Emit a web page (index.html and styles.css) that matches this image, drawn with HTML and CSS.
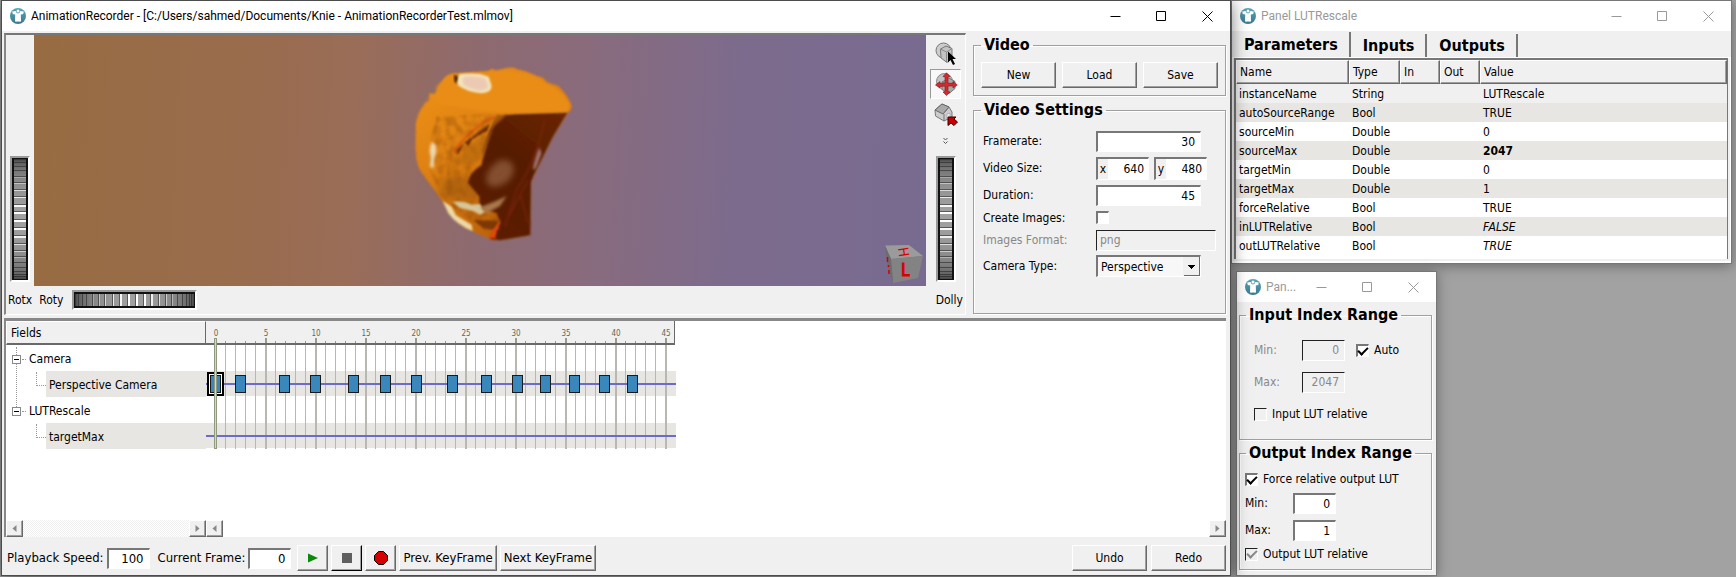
FILE: index.html
```
<!DOCTYPE html>
<html lang="en">
<head>
<meta charset="utf-8">
<title>AnimationRecorder</title>
<link rel="stylesheet" href="styles.css">
</head>
<body>
<svg class="defs" aria-hidden="true">
  <defs>
    <linearGradient id="teal" x1="0" y1="0" x2="0" y2="1"><stop offset="0" stop-color="#5ba6b8"/><stop offset="1" stop-color="#3a7890"/></linearGradient>
    <symbol id="logo" viewBox="0 0 16 16">
      <circle cx="8" cy="8" r="8" fill="url(#teal)"/>
      <path d="M2.200 3.400 5.600 3Q6 5.400 8 5.400T10.400 3L13.800 3.400 13.200 6 10.800 6.600 11 13.400 8.600 13.800 8 13 7.400 13.800 5 13.400 5.200 6.600 2.800 6Z" fill="#fff"/>
      <circle cx="8" cy="3" r="1.500" fill="#fff"/>
    </symbol>
    <symbol id="min" viewBox="0 0 11 11"><path d="M.5 5.500h10" stroke="currentColor" fill="none"/></symbol>
    <symbol id="max" viewBox="0 0 11 11"><path d="M.5.5h9v9h-9z" stroke="currentColor" fill="none"/></symbol>
    <symbol id="close" viewBox="0 0 11 11"><path d="M.5.5l10 10M10.500.5l-10 10" stroke="currentColor" fill="none"/></symbol>
    <symbol id="left" viewBox="0 0 5 9"><path d="M4.500 1v7L.5 4.500z" fill="#888"/></symbol>
    <symbol id="right" viewBox="0 0 5 9"><path d="M.5 1v7l4-3.500z" fill="#888"/></symbol>
  </defs>
</svg>

<div class="desktop">
  <main class="window window-main">
    <header class="titlebar">
      <svg class="logo"><use href="#logo"/></svg>
      <h1 class="caption">AnimationRecorder - [C:/Users/sahmed/Documents/Knie - AnimationRecorderTest.mlmov]</h1>
      <button class="wbtn" aria-label="Minimize"><svg><use href="#min"/></svg></button>
      <button class="wbtn" aria-label="Maximize"><svg><use href="#max"/></svg></button>
      <button class="wbtn" aria-label="Close"><svg><use href="#close"/></svg></button>
    </header>

    <div class="upper">
      <section class="viewer" aria-label="3D viewer">
        <div class="wheel-col"><svg class="wheel wheel-v" data-wheel="v"></svg></div>
        <div class="viewport">
          <svg class="scene" viewBox="0 0 892 251" preserveAspectRatio="xMidYMid meet">
            <defs>
              <filter id="rough" x="-10%" y="-10%" width="120%" height="120%" color-interpolation-filters="sRGB">
                <feTurbulence type="fractalNoise" baseFrequency=".15" numOctaves="3" seed="4" result="n"/>
                <feDisplacementMap in="SourceGraphic" in2="n" scale="7" xChannelSelector="R" yChannelSelector="G"/>
                <feGaussianBlur stdDeviation="2.800"/>
              </filter>
              <filter id="edge" x="-10%" y="-10%" width="120%" height="120%"><feGaussianBlur stdDeviation="2.500"/></filter>
              <filter id="soft" x="-30%" y="-30%" width="160%" height="160%"><feGaussianBlur stdDeviation="4"/></filter>
              <filter id="soft2" x="-50%" y="-50%" width="200%" height="200%"><feGaussianBlur stdDeviation="9"/></filter>
              <filter id="grain" x="0" y="0" width="100%" height="100%" color-interpolation-filters="sRGB">
                <feTurbulence type="fractalNoise" baseFrequency=".05 .035" numOctaves="4" seed="8"/>
                <feColorMatrix values="0 0 0 0 .42  0 0 0 0 .18  0 0 0 0 0  2.500 0 0 0 -.9"/>
                <feComposite in2="SourceGraphic" operator="in"/>
                <feGaussianBlur stdDeviation="2.500"/>
              </filter>
              <linearGradient id="skin" x1="0" y1="0" x2="0.600" y2="1"><stop offset="0" stop-color="#f09416"/><stop offset=".45" stop-color="#df8213"/><stop offset="1" stop-color="#b85f09"/></linearGradient>
              <linearGradient id="cut" x1="1" y1="0" x2="0.400" y2="1"><stop offset="0" stop-color="#6b2603"/><stop offset=".5" stop-color="#561c02"/><stop offset="1" stop-color="#5c1d05"/></linearGradient>
            </defs>
            <g transform="translate(366 15) scale(.3333)">
              <path d="M122 112Q130 72 165 70L230 72 275 62Q340 48 400 74L470 106Q510 140 515 170L505 190 458 262 405 372 393 400 391 557 300 571Q230 550 190 525L130 455 60 360Q46 330 47 290L48 220Q58 170 88 140Z" fill="#c4783a" opacity=".5" filter="url(#soft)"/>
              <path d="M88 130L105 132 122 112Q130 72 165 70L265 64 275 56 290 64Q340 45 350 58L375 64 400 74 430 84 440 100 475 108Q500 132 515 172L503 188 340 190 300 560 285 570Q240 560 190 525L130 455 60 360Q46 330 47 290L48 220Q58 170 88 150Z" fill="url(#skin)" filter="url(#rough)"/>
              <path d="M110 200L300 190 250 300 205 380 240 455 300 500 285 560 130 455 85 350 95 250Z" fill="#000" filter="url(#grain)" opacity=".3"/>
              <path d="M130 385Q190 365 205 385L240 455 150 448 115 430Z" fill="#9a560a" opacity=".5" filter="url(#soft2)"/>
              <path d="M318 194L503 187 458 262 430 318 402 374 393 396 391 556 300 571 270 566 300 515 290 490 240 470 238 440 205 400Q204 370 245 345 250 300 270 240Q290 205 318 194Z" fill="url(#cut)" filter="url(#edge)"/>
              <path d="M110 110Q130 85 165 78L275 66Q340 56 400 78L440 100Q495 122 512 170L503 186 340 189Q220 185 110 158Z" fill="#e98d14" filter="url(#soft)"/>
              <path d="M168 305Q190 275 215 262L268 222 262 244Q240 250 215 270L205 290 195 276 172 312Z" fill="#6b2a05" filter="url(#rough)"/>
              <path d="M165 312Q166 290 210 250T285 202" fill="none" stroke="#d8420f" stroke-width="4" filter="url(#rough)"/>
              <path d="M210 285Q235 265 262 248L250 325 200 345 165 340Z" fill="#b8690f" opacity=".6" filter="url(#soft)"/>
              <path d="M290 195L320 195 282 230 250 320 245 300Z" fill="#98500a" opacity=".8" filter="url(#rough)"/>
              <path d="M165 75Q155 90 170 102L180 82Z" fill="#3c1703" filter="url(#rough)"/>
              <path d="M178 73Q200 68 240 72L266 80 275 108Q275 128 245 130 200 126 174 106Q170 84 178 73Z" fill="#f3e4bb" filter="url(#edge)"/>
              <path d="M190 80Q220 76 255 84L265 108Q260 122 238 122 205 116 188 102Z" fill="#ecc9b3" filter="url(#soft)"/>
              <path d="M95 275Q85 300 92 320L90 350 101 355 103 325Q112 305 108 285Z" fill="#f0d8ab" filter="url(#soft)"/>
              <path d="M300 330Q340 325 342 360 335 398 290 410 260 415 258 385 265 350 300 330Z" fill="#a17050" opacity=".6" filter="url(#soft2)"/>
              <path d="M418 290Q405 320 398 360L408 355 424 310Z" fill="#a67e7b" filter="url(#soft)"/>
              <path d="M128 452L155 470 168 496 215 524 218 543Q170 525 145 490Z" fill="#eed9a3" filter="url(#edge)"/>
              <path d="M158 455Q190 452 215 464L240 462 255 485 240 494 222 484 180 474Z" fill="#d6c69a" filter="url(#edge)"/>
              <path d="M240 472L290 452 320 438 300 468 260 490Z" fill="#a9794b" filter="url(#soft)"/>
              <path d="M434 210Q410 330 350 420L315 530M385 390L325 500M360 430L385 520" fill="none" stroke="#8a2511" stroke-width="5" opacity=".6" filter="url(#soft)"/>
              <path d="M220 510L300 512 285 540 250 535Z" fill="#7d3806" filter="url(#rough)"/>
              <path d="M302 512L285 532 265 562 284 566Z" fill="#e24a0b" filter="url(#rough)"/>
            </g>
          </svg>
          <svg class="cube" viewBox="0 0 40 40" aria-hidden="true">
            <path d="M1 1.500 25 1 39 12 7 15Z" fill="#9b9b9b"/>
            <path d="M7 15 39 12 34 34 9 39Z" fill="#838383"/>
            <path d="M1 1.500 7 15 9 39 4 25Z" fill="#6d6d6d"/>
            <path d="M3.500 13v5M4.500 21v2M5 26v4" stroke="#d40000" stroke-width="1.500"/>
            <text x="17" y="32" class="cube-face">L</text>
            <text class="cube-face cube-top" transform="translate(14 4) rotate(82)">H</text>
          </svg>
        </div>
        <div class="tools">
          <button class="tool" aria-label="Select">
            <svg viewBox="0 0 24 24">
              <circle cx="9.500" cy="8.500" r="7.500" fill="#ccc" stroke="#777"/>
              <path d="M6.500 7 12 4 18 6.500V16L13 20.500 7 16Z" fill="#c2c2c2" stroke="#777"/><path d="M6.500 7l6 3 5.500-3.500M12.500 10v10" fill="none" stroke="#888"/>
              <path d="M14 9.500v11l2.500-2.500 2.500 5 2-1-2.500-5H22z" fill="#000"/>
            </svg>
          </button>
          <button class="tool tool-on" aria-label="Rotate and pan">
            <svg viewBox="0 0 24 24">
              <circle cx="10.500" cy="9.500" r="8" fill="#c4c4c4" stroke="#888"/><path d="M8 10l7-4 6 3.500v7l-6 5-7-4z" fill="#a9a9a9" stroke="#777"/><path d="M8 10l6 3 7-3.500" fill="none" stroke="#777"/>
              <path d="M12.500.8 16 4.500l-2 .5v6l5 .5V9.500L23.300 13 19 16v-2l-5 0v5.500l2 .5-3.500 3.500L9 20l2-.5V14l-5 .5V16L1.500 13 6 9.500v2l5-.5V5L9 4.500Z" fill="#d32a30" stroke="#8e1014" stroke-width=".6"/>
            </svg>
          </button>
          <button class="tool" aria-label="Home view">
            <svg viewBox="0 0 24 24">
              <path d="M1 8 8 2 15 5 18 10V15L10 19 1.500 14Z" fill="#ccc" stroke="#777"/>
              <path d="M1 8 8 2 15 5 9 12Z" fill="#aaa" stroke="#666"/><path d="M10 12v7M15 5 9 12" stroke="#777" fill="none"/><path d="M13 12v5l3-1v-5z" fill="#eee" stroke="#888" stroke-width=".5"/>
              <path d="M14 15h8l-2 2 3.500 3-3.500 3.500L17 21l-3 2.500z" fill="#c90000" stroke="#3c0000"/>
            </svg>
          </button>
          <button class="tool tool-more" aria-label="More tools"><svg viewBox="0 0 5 8"><path d="M.5 1l2 2 2-2M.5 4.500l2 2 2-2" fill="none" stroke="#555"/></svg></button>
          <svg class="wheel wheel-v" data-wheel="v"></svg>
        </div>
        <div class="viewer-foot">
          <span>Rotx</span><span>Roty</span>
          <svg class="wheel wheel-h" data-wheel="h"></svg>
          <span class="push">Dolly</span>
        </div>
      </section>

      <aside class="side">
        <fieldset class="group group-video">
          <legend>Video</legend>
          <button class="btn">New</button><button class="btn">Load</button><button class="btn">Save</button>
        </fieldset>
        <fieldset class="group group-settings">
          <legend>Video Settings</legend>
          <label for="fps">Framerate:</label><input class="field w105" id="fps" value="30">
          <label for="vx">Video Size:</label>
          <div class="pair">
            <span class="axis"><label for="vx">x</label><input id="vx" value="640"></span>
            <span class="axis"><label for="vy">y</label><input id="vy" value="480"></span>
          </div>
          <label for="dur">Duration:</label><input class="field w105" id="dur" value="45">
          <label for="ci">Create Images:</label><input type="checkbox" class="check" id="ci">
          <label for="fmt" class="off">Images Format:</label><input class="field field-text" id="fmt" value="png" disabled>
          <label for="cam">Camera Type:</label>
          <select id="cam" class="combo w105"><option>Perspective</option><option>Orthographic</option></select>
        </fieldset>
      </aside>
    </div>

    <section class="timeline" aria-label="Timeline">
      <div class="fields">
        <div class="fields-head">Fields</div>
        <ul class="tree">
          <li><span class="node"><button class="fold" aria-label="Collapse Camera"></button>Camera</span>
            <ul><li><span class="leaf">Perspective Camera</span></li></ul></li>
          <li><span class="node"><button class="fold" aria-label="Collapse LUTRescale"></button>LUTRescale</span>
            <ul><li><span class="leaf">targetMax</span></li></ul></li>
        </ul>
        <div class="scroll scroll-dither">
          <button class="sbtn" aria-label="Scroll left"><svg><use href="#left"/></svg></button>
          <button class="sbtn" aria-label="Scroll right"><svg><use href="#right"/></svg></button>
        </div>
      </div>
      <div class="tracks">
        <svg class="track-canvas" id="tracks" width="470" height="129"></svg>
        <div class="scroll">
          <button class="sbtn" aria-label="Scroll left"><svg><use href="#left"/></svg></button>
          <button class="sbtn" aria-label="Scroll right"><svg><use href="#right"/></svg></button>
        </div>
      </div>
    </section>

    <footer class="transport">
      <label for="speed">Playback Speed:</label><input class="field w43" id="speed" value="100">
      <label for="frame" class="gap">Current Frame:</label><input class="field w43" id="frame" value="0">
      <div class="transport-buttons">
        <button class="btn btn-icon" aria-label="Play"><svg viewBox="0 0 14 14"><path d="M2 2.500v9l10-4.500z" fill="#0a8a0a"/></svg></button>
        <button class="btn btn-icon btn-default" aria-label="Stop"><svg viewBox="0 0 14 14"><path d="M2 2h10v10H2z" fill="#5f5f5f"/></svg></button>
        <button class="btn btn-icon" aria-label="Record"><svg viewBox="0 0 14 14"><path d="M4.500.5h5l4 4v5l-4 4h-5l-4-4v-5z" fill="#d40000" stroke="#000" stroke-linejoin="round"/></svg></button>
        <button class="btn btn-fit">Prev. KeyFrame</button>
        <button class="btn btn-fit">Next KeyFrame</button>
      </div>
      <div class="history"><button class="btn">Undo</button><button class="btn">Redo</button></div>
    </footer>
  </main>

  <div class="panels">
    <section class="window window-lut">
      <header class="titlebar inactive">
        <svg class="logo"><use href="#logo"/></svg>
        <h2 class="caption">Panel LUTRescale</h2>
        <button class="wbtn" aria-label="Minimize"><svg><use href="#min"/></svg></button>
        <button class="wbtn" aria-label="Maximize"><svg><use href="#max"/></svg></button>
        <button class="wbtn" aria-label="Close"><svg><use href="#close"/></svg></button>
      </header>
      <div class="tabs" role="tablist">
        <button class="tab tab-on" role="tab" aria-selected="true">Parameters</button>
        <button class="tab" role="tab">Inputs</button>
        <button class="tab" role="tab">Outputs</button>
      </div>
      <div class="tab-page">
        <div class="list">
          <table class="params">
            <colgroup><col class="c-name"><col class="c-type"><col class="c-io"><col class="c-io"><col></colgroup>
            <thead><tr><th>Name</th><th>Type</th><th>In</th><th>Out</th><th>Value</th></tr></thead>
            <tbody>
              <tr class="head-row"><td>instanceName</td><td>String</td><td></td><td></td><td>LUTRescale</td></tr>
              <tr><td>autoSourceRange</td><td>Bool</td><td></td><td></td><td>TRUE</td></tr>
              <tr><td>sourceMin</td><td>Double</td><td></td><td></td><td>0</td></tr>
              <tr><td>sourceMax</td><td>Double</td><td></td><td></td><td><b>2047</b></td></tr>
              <tr><td>targetMin</td><td>Double</td><td></td><td></td><td>0</td></tr>
              <tr><td>targetMax</td><td>Double</td><td></td><td></td><td>1</td></tr>
              <tr><td>forceRelative</td><td>Bool</td><td></td><td></td><td>TRUE</td></tr>
              <tr><td>inLUTRelative</td><td>Bool</td><td></td><td></td><td><i>FALSE</i></td></tr>
              <tr><td>outLUTRelative</td><td>Bool</td><td></td><td></td><td><i>TRUE</i></td></tr>
            </tbody>
          </table>
        </div>
      </div>
    </section>

    <section class="window window-range">
      <header class="titlebar inactive">
        <svg class="logo"><use href="#logo"/></svg>
        <h2 class="caption">Pan...</h2>
        <button class="wbtn" aria-label="Minimize"><svg><use href="#min"/></svg></button>
        <button class="wbtn" aria-label="Maximize"><svg><use href="#max"/></svg></button>
        <button class="wbtn" aria-label="Close"><svg><use href="#close"/></svg></button>
      </header>
      <div class="range-body">
        <fieldset class="group group-in">
          <legend>Input Index Range</legend>
          <div class="line"><label for="imin" class="off">Min:</label><input class="field w43" id="imin" value="0" disabled>
            <input type="checkbox" class="check" id="auto" checked><label for="auto">Auto</label></div>
          <div class="line"><label for="imax" class="off">Max:</label><input class="field w43" id="imax" value="2047" disabled></div>
          <div class="line"><input type="checkbox" class="check check-dim" id="ilr"><label for="ilr">Input LUT relative</label></div>
        </fieldset>
        <fieldset class="group group-out">
          <legend>Output Index Range</legend>
          <div class="line line-check"><input type="checkbox" class="check" id="force" checked><label for="force">Force relative output LUT</label></div>
          <div class="line"><label for="omin">Min:</label><input class="field w43" id="omin" value="0"></div>
          <div class="line"><label for="omax">Max:</label><input class="field w43" id="omax" value="1"></div>
          <div class="line line-check"><input type="checkbox" class="check check-dim" id="olr" checked disabled><label for="olr">Output LUT relative</label></div>
        </fieldset>
      </div>
    </section>
  </div>
</div>
<script src="app.js"></script>
</body>
</html>
```
FILE: styles.css
```
* { box-sizing: border-box; }
body {
  margin: 0;
  background: #a2a2a2;
  color: #000;
  font: 12px/16px "DejaVu Sans Condensed", Tahoma, "Noto Sans", sans-serif;
}
button, input, select { font: inherit; color: inherit; margin: 0; padding: 0; border-radius: 0; }
button { background: none; border: 0; }
ul { list-style: none; margin: 0; padding: 0; }
.defs { position: absolute; width: 0; height: 0; }

.desktop {
  display: grid;
  grid-template-columns: minmax(0, 1fr) 501px;
  min-height: 100vh;
  padding: 0 4px 1px 1px;
}
.panels { display: flex; flex-direction: column; gap: 7px; }
.window {
  display: flex;
  flex-direction: column;
  background: #f0f0f0;
  border: 1px solid #777;
  box-shadow: 0 2px 12px rgba(0, 0, 0, .35);
}
.window-main { position: relative; z-index: 1; border-color: #4c4c4c; box-shadow: 0 2px 16px rgba(0, 0, 0, .55); }

.titlebar { display: flex; align-items: center; height: 30px; flex: none; background: #fff; padding-left: 8px; }
.logo { width: 16px; height: 16px; flex: none; }
.caption { flex: 1; margin: 0 0 0 5px; font: 12px/16px Roboto, "Noto Sans", sans-serif; white-space: nowrap; overflow: hidden; }
.inactive .caption, .inactive .wbtn { color: #999; }
.wbtn { width: 46px; height: 30px; display: grid; place-items: center; flex: none; }
.wbtn svg { width: 11px; height: 11px; }

.upper { display: flex; gap: 7px; padding: 2px 4px 0 2px; }
.viewer {
  flex: 1;
  display: grid;
  grid-template-columns: 28px minmax(0, 1fr) 39px;
  grid-template-rows: 251px 28px;
  border: 2px solid;
  border-width: 2px 1px 1px 2px;
  border-color: #777 #fff #fff #888;
}
.viewport {
  position: relative;
  overflow: hidden;
  background: linear-gradient(93deg, #976c42 0%, #996c4c 22%, #996d58 36%, #8e6a6f 49%, #8a6b7b 60%, #7d6b8d 78%, #786b90 100%);
}
.scene { display: block; width: 100%; height: 100%; }
.cube { position: absolute; right: 2px; bottom: 2px; width: 40px; height: 40px; }
.cube-face { font: 17px "DejaVu Sans Condensed", sans-serif; fill: #d80000; stroke: #d80000; stroke-width: 1px; }
.cube-top { font-size: 14px; stroke-width: 0; }
.wheel-col { display: flex; align-items: flex-end; padding: 0 0 4px 4px; }
.wheel { display: block; background: #111; border: 2px solid; border-color: #999 #fff #fff #999; }
.wheel-v { width: 20px; height: 126px; }
.wheel-h { width: 125px; height: 20px; margin-left: 2px; }
.tools { display: flex; flex-direction: column; align-items: center; padding: 4px 0; }
.tools .wheel { margin-top: auto; }
.tool { width: 31px; height: 30px; display: grid; place-items: center; border: 1px solid transparent; }
.tool svg { width: 24px; height: 24px; }
.tool-on { border-color: #999 #fff #fff #999; background: #f8f8f8; }
.tool-more svg { width: 5px; height: 8px; }
.tool-more { height: 23px; }
.viewer-foot { grid-column: 1 / -1; display: flex; align-items: center; gap: 7px; padding: 0 2px; }
.push { margin-left: auto; }

.side { width: 253px; display: flex; flex-direction: column; gap: 4px; padding: 2px 0 1px; }
.group { min-width: 0; margin: 0; border: 1px solid #a0a0a0; box-shadow: 1px 1px 0 #fff, inset 1px 1px 0 #fff; }
.group legend { font-size: 16px; line-height: 20px; font-weight: bold; padding: 0 3px; white-space: nowrap; }
.group-video { display: flex; gap: 6px; padding: 7px; }
.group-settings {
  flex: 1;
  display: grid;
  grid-template-columns: 113px 1fr;
  grid-template-rows: 22px 24px 22px 15px 22px 22px;
  row-gap: 4px;
  align-items: center;
  align-content: start;
  padding: 10px 8px 0 9px;
}
.group-settings legend { margin-left: -2px; }
.btn {
  width: 75px;
  height: 26px;
  border: 1px solid;
  border-color: #fff #696969 #696969 #fff;
  box-shadow: inset -1px -1px 0 #a0a0a0;
  background: #f0f0f0;
  white-space: nowrap;
}
.field {
  height: 21px;
  min-width: 0;
  padding: 0 5px;
  text-align: right;
  background: #fff;
  border: 2px solid;
  border-width: 2px 1px 1px 2px;
  border-color: #777 #fff #fff #777;
}
.field:disabled { background: #f0f0f0; color: #888; border-color: #222 #fff #fff #222; border-width: 1px; }
.field-text { width: 120px; text-align: left; padding: 0 3px; }
.off { color: #888; }
.w105 { width: 105px; }
.w43 { width: 43px; }
.pair { display: flex; gap: 5px; }
.axis { display: flex; align-items: center; width: 53px; height: 23px; border: 2px solid; border-width: 2px 1px 1px 2px; border-color: #777 #fff #fff #777; }
.axis label { width: 10px; text-align: center; }
.axis input { flex: 1; min-width: 0; height: 20px; border: 0; padding-right: 4px; text-align: right; background: #fff; }
.check {
  appearance: none;
  width: 13px;
  height: 13px;
  flex: none;
  background: #fff;
  border: 2px solid;
  border-width: 2px 1px 1px 2px;
  border-color: #777 #fff #fff #777;
  display: grid;
  place-items: center;
}
.check:checked::before { content: ""; width: 8px; height: 4px; border: 2px solid #000; border-width: 0 0 2px 2px; transform: translateY(-1px) rotate(-45deg); }
.check-dim { background: #f0f0f0; border-width: 1px; border-color: #222 #fff #fff #222; }
.check-dim:checked::before { border-color: #888; }
.combo {
  height: 22px;
  appearance: none;
  padding-left: 3px;
  border: 2px solid;
  border-width: 2px 1px 1px 2px;
  border-color: #777 #fff #fff #777;
  background:
    conic-gradient(from 135deg at 50% 100%, transparent 0) right 5px center / 8px 4px no-repeat,
    conic-gradient(from -45deg at 50% 100%, #000 90deg, transparent 0) right 5px center / 8px 4px no-repeat,
    linear-gradient(#696969, #696969) right 0 top 0 / 1px 100% no-repeat,
    linear-gradient(#696969, #696969) right 0 bottom 0 / 16px 1px no-repeat,
    #f0f0f0;
  background:
    conic-gradient(from -45deg at 50% 100%, #000 90deg, transparent 0) right 5px center / 8px 4px no-repeat,
    linear-gradient(#696969, #696969) right 0 top 0 / 1px 100% no-repeat,
    linear-gradient(#696969, #696969) right 0 bottom 0 / 16px 1px no-repeat,
    linear-gradient(#f0f0f0, #f0f0f0) right 0 top 0 / 17px 100% no-repeat,
    #f7f7f7;
}

.timeline {
  flex: 1;
  display: grid;
  grid-template-columns: 200px minmax(0, 1fr);
  margin: 3px 4px 0 2px;
  border: 2px solid #888;
  border-width: 3px 0 0 2px;
  background: #fff;
}
.fields, .tracks { display: flex; flex-direction: column; min-width: 0; }
.fields-head {
  height: 24px;
  padding: 3px 4px;
  background: #f0f0f0;
  border: 1px solid #fff;
  border-right-color: #696969;
  border-bottom: 2px solid #696969;
}
.tree .node { display: flex; align-items: center; height: 26px; padding: 2px 0 0 6px; gap: 8px; }
.tree > li { position: relative; }
.tree > li:first-child::before { content: ""; position: absolute; left: 10px; top: 2px; height: 60px; border-left: 1px dotted #999; }
.fold { width: 9px; height: 9px; border: 1px solid #888; background: linear-gradient(#000, #000) center / 5px 1px no-repeat #fff; position: relative; }
.fold::after { content: ""; position: absolute; left: 9px; top: 3px; width: 4px; border-top: 1px dotted #999; }
.tree ul { padding-left: 30px; }
.tree ul li { display: flex; }
.tree ul li::before { content: ""; width: 9px; height: 13px; margin: 1px 0 0 0; border: 1px dotted #999; border-width: 0 0 1px 1px; }
.leaf { flex: 1; padding: 6px 0 4px 3px; background: #e8e6e2; }
.track-canvas { display: block; }
.tick-label { font: 8px "DejaVu Sans Condensed", sans-serif; fill: #66665c; text-anchor: middle; }
.scroll { display: flex; justify-content: space-between; margin-top: auto; height: 17px; }
.scroll-dither { background: repeating-conic-gradient(#fff 0 25%, #f0f0f0 0 50%) 0 0 / 2px 2px; }
.sbtn { width: 17px; display: grid; place-items: center; background: #f0f0f0; border: 1px solid; border-color: #fff #696969 #696969 #fff; box-shadow: inset -1px -1px 0 #a0a0a0; }
.sbtn svg { width: 5px; height: 9px; }
.transport { display: flex; align-items: center; gap: 3px; height: 38px; padding: 4px 4px 0 5px; }
.transport > label, .transport > .field, .btn-fit { font-size: 13px; }
.transport .gap { margin-left: 5px; }
.transport-buttons { display: flex; gap: 3px; margin-left: 3px; }
.btn-icon { width: 31px; display: grid; place-items: center; }
.btn-icon svg { width: 14px; height: 14px; }
.btn-default { border-color: #fff #000 #000 #fff; }
.btn-fit { width: auto; padding: 0 3px; }
.history { display: flex; gap: 4px; margin-left: auto; }

.window-lut { height: 264px; }
.tabs { display: flex; align-items: flex-end; height: 26px; }
.tab { height: 23px; padding: 0 11px 0 12px; font-size: 16px; line-height: 20px; font-weight: bold; border-right: 2px solid #777; }
.tab-on { height: 25px; }
.tab-page { flex: 1; padding: 0 2px 2px 1px; border: 1px solid #fff; border-width: 1px 1px 2px; }
.list { height: 100%; background: #fff; border: 1px solid #777; border-width: 2px 1px 0 2px; }
.params { width: 100%; border-collapse: separate; border-spacing: 0; table-layout: fixed; }
.c-name { width: 113px; }
.c-type { width: 51px; }
.c-io { width: 40px; }
.params th { height: 24px; padding: 0 0 0 3px; text-align: left; font-weight: normal; background: #f0f0f0; border: 1px solid; border-color: #fff #696969 #696969 #fff; box-shadow: inset -1px -1px 0 #a0a0a0; }
.params td { height: 19px; padding: 0 0 0 3px; line-height: 16px; white-space: nowrap; }
.params tr:nth-child(even) td { background: #e8e6e2; }
.params .head-row td { background: #f0f0f0; }

.window-range { width: 201px; margin-left: 5px; }
.range-body { display: flex; flex-direction: column; gap: 3px; padding: 3px 4px 5px 2px; }
.group-in { display: flex; flex-direction: column; gap: 10px; padding: 14px; }
.group-in legend { margin-left: -8px; }
.group-out legend { margin-left: 1px; }
.group-out { display: flex; flex-direction: column; gap: 5px; padding: 8px 5px 7px; }
.line { display: flex; align-items: center; height: 22px; }
.group-in .line > .off, .group-out .line > label:first-child { width: 48px; }
.line .check + label { margin-left: 5px; white-space: nowrap; }
.line .field + .check { margin-left: 11px; }
.line-check { height: 16px; }
```
FILE: app.js
```
const NS = "http://www.w3.org/2000/svg";

function add(parent, tag, attrs, text) {
  const el = document.createElementNS(NS, tag);
  for (const key in attrs) el.setAttribute(key, attrs[key]);
  if (text !== undefined) el.textContent = text;
  parent.appendChild(el);
  return el;
}

/* Thumb wheels: ridges on a cylinder seen from the side. */
function drawWheel(svg) {
  const vertical = svg.dataset.wheel === "v";
  const length = vertical ? 120 : 119;
  const radius = length / 2;
  const bar = (pos, size, color) => add(svg, "rect", vertical
    ? { x: 2, y: pos, width: 12, height: size, fill: color }
    : { x: pos, y: 2, width: size, height: 12, fill: color });
  const grey = v => `rgb(${v},${v},${v})`;
  for (let p = 0; p < length; p++) {
    const c = Math.sqrt(1 - ((p + 0.5 - radius) / radius) ** 2);
    bar(p + 1, 1, grey(Math.round(60 + 100 * c)));
  }
  for (let k = -10; k <= 10; k++) {
    const a = k * 0.1333 + 0.04;
    const pos = Math.round(radius + radius * Math.sin(a));
    const c = Math.cos(a);
    bar(pos - 1, 1, grey(Math.round(45 + 45 * c)));
    if (c > 0.7) bar(pos, c > 0.95 ? 2 : 1, grey(Math.round(160 + 95 * (c - 0.7) / 0.3)));
  }
}
document.querySelectorAll("[data-wheel]").forEach(drawWheel);

/* Timeline: ruler, two tracks and the keyframes of the camera track. */
const tracks = document.getElementById("tracks");
const origin = 10;
const headHeight = 24;
const keyframes = [0, 2.5, 6.9, 10, 13.8, 17, 20.1, 23.7, 27.1, 30.2, 33, 35.9, 38.9, 41.7];

add(tracks, "rect", { x: 0, y: 0, width: 469, height: 24, fill: "#f0f0f0" });
add(tracks, "rect", { x: 0, y: 22, width: 469, height: 2, fill: "#696969" });
add(tracks, "rect", { x: 468, y: 0, width: 1, height: 24, fill: "#696969" });
[50, 102].forEach(y => add(tracks, "rect", { x: 0, y, width: 470, height: 25, fill: "#e8e6e2" }));
for (let f = 0; f <= 45; f++) {
  const major = f % 5 === 0;
  const x = origin + f * 10 - 1;
  const width = major ? 2 : 1;
  add(tracks, "rect", { x, y: headHeight, width, height: 104, fill: "#b8b8b2" });
  add(tracks, "rect", { x, y: major ? 17 : 20, width, height: major ? 5 : 2, fill: "#99998f" });
  if (major) add(tracks, "text", { x: origin + f * 10, y: 15, class: "tick-label" }, f);
}
[62, 114].forEach(y => add(tracks, "rect", { x: 0, y, width: 470, height: 2, fill: "#6c6cc8" }));
add(tracks, "rect", { x: 2, y: 52, width: 15, height: 22, fill: "#fff", stroke: "#000", "stroke-width": 2 });
keyframes.forEach(f => add(tracks, "rect", {
  x: Math.round(origin + f * 10) - 5.5, y: 54.5, width: 10, height: 17, fill: "#3a88bb", stroke: "#1a1a1a"
}));
add(tracks, "rect", { x: 8, y: 17, width: 3, height: 111, fill: "#8f9a80" });
add(tracks, "rect", { x: 9, y: 18, width: 1, height: 109, fill: "#cfe0a4" });
```
